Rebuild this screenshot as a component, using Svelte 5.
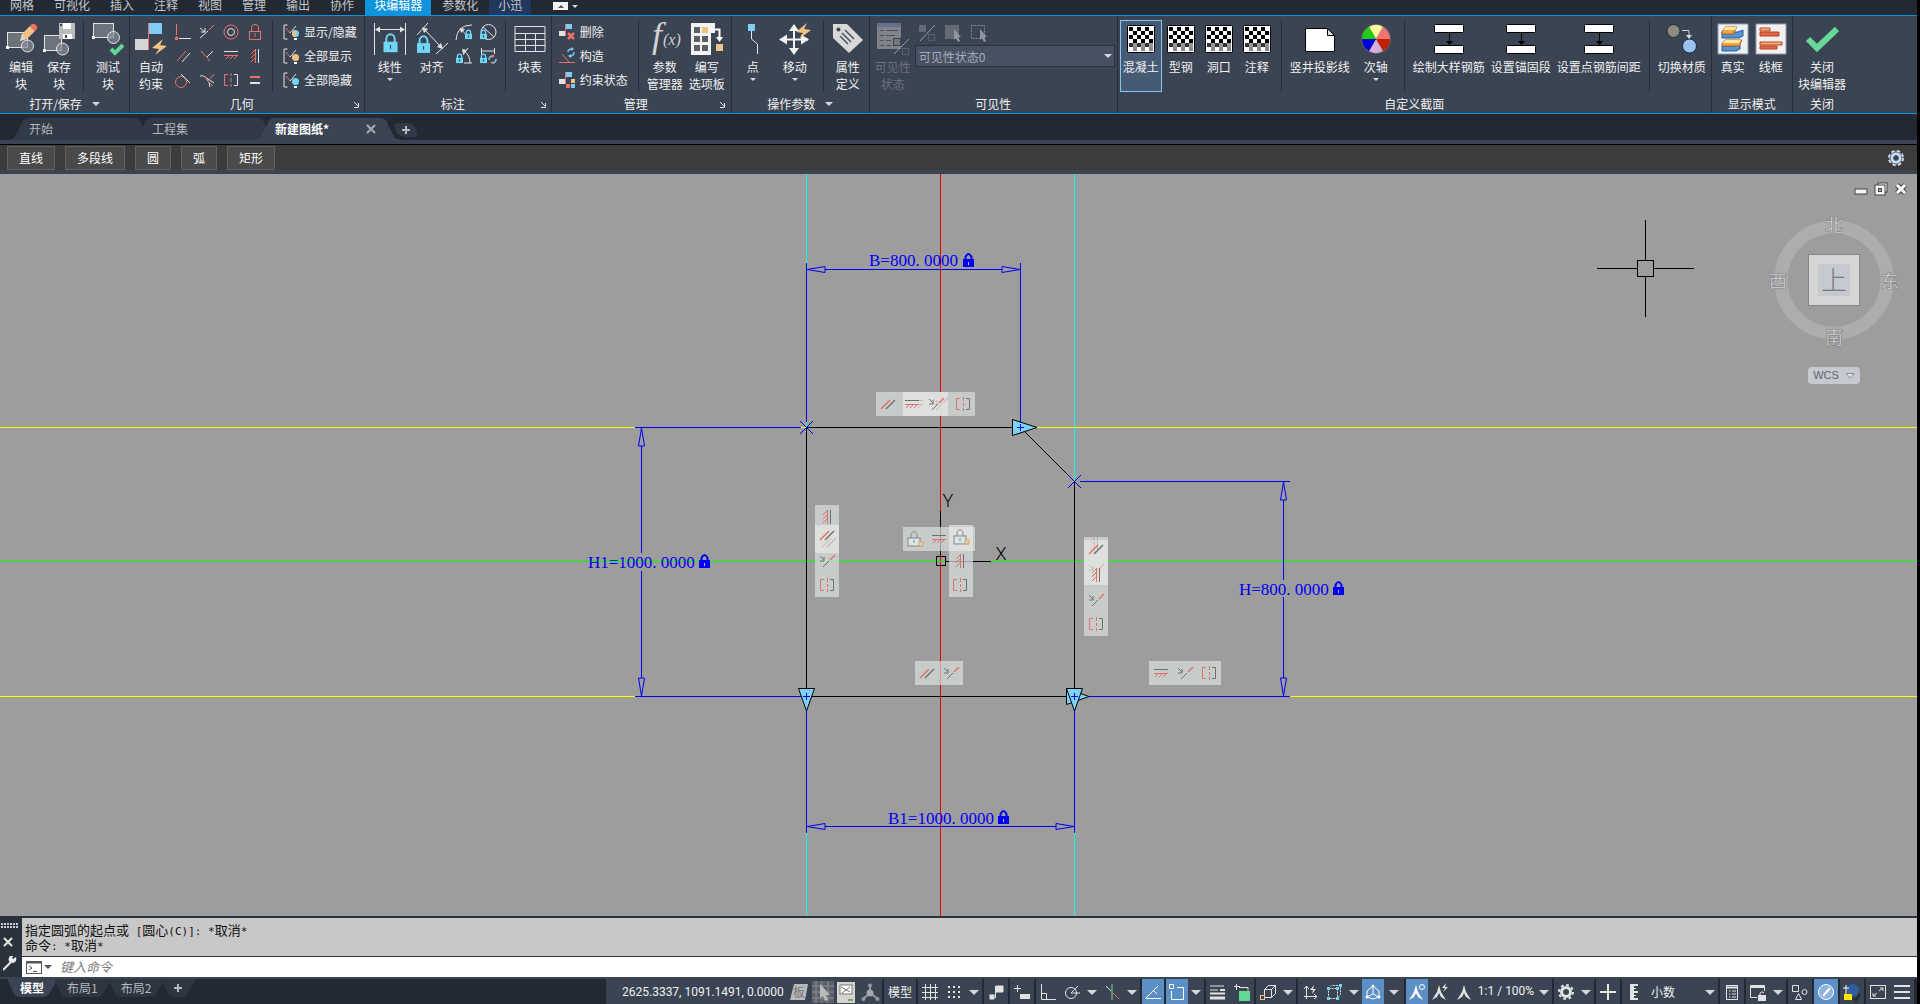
<script>
  const menuTabs = ['网格', '可视化', '插入', '注释', '视图', '管理', '输出', '协作', '块编辑器', '参数化', '小迅'];
  const R = '#ef6f68';
  const W = '#e3e3e3';
  const B = '#7fcaf7';
  const C = '#6fd6f6';
  const O = '#f2c185';
  const padlock = (x, y, w, c = C) =>
    `<path d="M${x + w * 0.2} ${y + w * 0.6}V${y + w * 0.38}a${w * 0.3} ${w * 0.36} 0 0 1 ${w * 0.6} 0V${y + w * 0.6}" fill="none" stroke="${c}" stroke-width="${w > 9 ? 2 : 1.3}"/><rect x="${x}" y="${y + w * 0.55}" width="${w}" height="${w * 0.75}" fill="${c}"/><path d="M${x + w / 2} ${y + w * 0.78}v${w * 0.28}" stroke="#26506a" stroke-width="1.2"/>`;
  const bolt = (x, y) => `<path d="M${x + 11} ${y}L${x} ${y + 9}l7 1l-4 6l12-9l-7-1z" fill="${O}"/>`;
  const link = `<path d="M4.500 1H1v14h3.500" fill="none" stroke="${W}"/><path d="M3 4l4 5" fill="none" stroke="${R}"/><path d="M7 9l6-7" stroke="${W}"/>`;
  const flags = `<path d="M6.500 0v12" stroke="${R}"/><rect x="7" width="6" height="5" fill="${B}"/><rect y="7" width="6" height="5" fill="${W}"/>`;
  const bar2 = `<rect x="1.500" y="1.500" width="29" height="8" rx="1" fill="#fff" stroke="#000"/><rect x="1.500" y="22.500" width="29" height="8" rx="1" fill="#fff" stroke="#000"/><path d="M16.500 10v9" stroke="#000"/><path d="M13 18h7l-3.500 4z"/>`;
  let checks = '<rect x="2.500" y="2.500" width="27" height="27" rx="1" fill="#fff" stroke="#000"/>';
  for (let r = 0; r < 6; r++)
    for (let c = 0; c < 6; c++)
      if (r === 5 ? c % 2 === 1 : (r + c) % 2 === (r > 3 ? 1 : 0) || r === 4)
        checks += `<rect x="${4 + c * 4}" y="${4 + r * 4}" width="4" height="4" fill="${r === 5 ? '#888' : r === 4 ? ((c % 2) ? '#999' : '#333') : '#000'}"/>`;
  const wheelColors = ['#fffb9c', '#ef7670', '#c22000', '#d9add9', '#0000d8', '#22cf0c'];
  const wheel = wheelColors
    .map((c, i) => {
      const p = (d) => `${16 + 14 * Math.sin((d * Math.PI) / 180)} ${16 - 14 * Math.cos((d * Math.PI) / 180)}`;
      return `<path d="M16 16L${p(i * 60 - 30)}A14 14 0 0 1 ${p(i * 60 + 30)}z" fill="${c}"/>`;
    })
    .join('');

  const icons = {
    edit: `<rect x="2.500" y="9.500" width="20" height="15" fill="#6d737d" stroke="${W}"/><circle cx="22.500" cy="23" r="6" fill="#8a8f98" fill-opacity=".7" stroke="${W}"/><rect x="1" y="23" width="3" height="3" fill="#fff"/><path d="M15 18l2-7l8-8l5 5l-8 8z" fill="${O}"/><path d="M15 18l2-7l4 5z" fill="#dcd6cc"/><path d="M25 3l2-2q2-1 4 1t1 4l-2 2z" fill="${R}"/>`,
    save: `<rect x="1.500" y="12.500" width="17" height="15" fill="#6d737d" stroke="${W}"/><circle cx="19.500" cy="26" r="6" fill="#8a8f98" fill-opacity=".7" stroke="${W}"/><rect y="26" width="3" height="3" fill="#fff"/><rect x="16" width="16" height="16" fill="#b9bdbb"/><path d="M20 0h8v6h-8zM20 11h9v5h-9z" fill="#fff"/><path d="M22 12h2v3h-2zM17 1h2v2h-2z" fill="#3b4453"/>`,
    test: `<rect x="1.500" y=".5" width="20" height="14" fill="#6d737d" stroke="${W}"/><circle cx="21.500" cy="14.500" r="6" fill="#8a8f98" fill-opacity=".7" stroke="${W}"/><rect y="13" width="3" height="3" fill="#fff"/><path d="M19 26l4 4l8-8" fill="none" stroke="#62d895" stroke-width="4"/>`,
    auto: `<rect x="14" width="13" height="11" fill="${B}"/><rect y="16" width="13" height="11" fill="#d6d6d6"/><path d="M13.500 0v27" stroke="${R}"/>${bolt(17, 16)}`,
    perp: `<path d="M1.500 0v11m0 1v3" stroke="${R}"/><path d="M0 13h3v3H0z" fill="${R}"/><path d="M4 14.500h12" stroke="${W}"/>`,
    onto: `<path d="M1 4l5 4M6 4v4H2" stroke="${W}" fill="none"/><path d="M1 14l8-7" stroke="${W}"/><path d="M10 6l5-5" stroke="${R}"/>`,
    conc: `<circle cx="8" cy="8" r="7" fill="none" stroke="${R}"/><circle cx="8" cy="8" r="3.500" fill="none" stroke="${W}"/>`,
    fix: `<path d="M4.500 7V3.500q0-3 3.500-3t3.500 3V7" fill="none" stroke="${R}"/><rect x="2.500" y="7.500" width="11" height="8" fill="none" stroke="${R}"/><path d="M8 9v4" stroke="${R}"/>`,
    para: `<path d="M2 13L11 3" stroke="${R}"/><path d="M7 14L15 5" stroke="${W}"/>`,
    tick: `<path d="M2 3l9 10" stroke="${R}"/><path d="M8 9l6-6" stroke="${W}"/>`,
    horiz: `<path d="M1 3.500h14" stroke="${W}"/><path d="M1 7.500h14M3 11l3-3M7 11l3-3M11 11l3-3" stroke="${R}" fill="none"/>`,
    vert: `<path d="M11.500 1v14" stroke="${W}"/><path d="M8.500 1v14M4 6l4-4M4 10l4-4M4 14l4-4" stroke="${R}" fill="none"/>`,
    tang: `<circle cx="6" cy="10" r="5.500" fill="none" stroke="${R}"/><path d="M6 2l9 9" stroke="${W}"/>`,
    smooth: `<path d="M1 4q3-1 5 1l9 6M7 6q4 4 4 9" fill="none" stroke="${W}"/><path d="M6 5l3 3M11 7l4-5M9 9l5 5" stroke="${R}"/>`,
    sym: `<path d="M5 2.500H1.500v11H5M8 1v3M8 6v4M8 12v3" fill="none" stroke="${R}"/><path d="M11 2.500h3.500v11H11" fill="none" stroke="${W}"/>`,
    equal: `<rect x="3" y="4" width="10" height="2" fill="${R}"/><rect x="3" y="10" width="10" height="2" fill="${W}"/>`,
    toggle: `${link}<circle cx="12.500" cy="9.500" r="3.500" fill="${C}"/><path d="M12.500 6a3.500 3.500 0 0 0 0 7z" fill="${O}"/><path d="M11 14h3v2h-3z" fill="#fff"/>`,
    showAll: `${link}<circle cx="12.500" cy="9.500" r="3.500" fill="${O}"/><path d="M11 14h3v2h-3z" fill="#fff"/>`,
    hideAll: `${link}<circle cx="12.500" cy="9.500" r="3.500" fill="${C}"/><path d="M11 14h3v2h-3z" fill="#fff"/>`,
    linear: `<path d="M.5 0v32M31.500 0v32M2 6.500h28" stroke="${W}"/><path d="M1 6.500l5-3v6zM31 6.500l-5-3v6z" fill="${W}"/>${padlock(9.500, 11, 14)}`,
    aligned: `<path d="M1 12L12 0M20 31L32 20M8 6l17 18" stroke="${W}"/><path d="M6 4l6 2l-4 4zM27 26l-6-2l4-4z" fill="${W}"/>${padlock(1, 13, 13)}`,
    radius: `<path d="M0 16Q1 1 16 1M5 5l6 7" fill="none" stroke="${W}"/><path d="M4 4l5 1l-4 4z" fill="${W}"/>${padlock(9, 6, 7)}`,
    diam: `<circle cx="8.500" cy="8" r="7.500" fill="none" stroke="${W}"/><path d="M3 3l11 10" stroke="${W}"/>${padlock(0, 6, 7)}`,
    angular: `<path d="M7 7l5-7M8 15h8M8 3q6 4 6 12" fill="none" stroke="${W}"/><path d="M11 2l-5-1l1 5z" fill="${W}"/>${padlock(0, 6, 7)}`,
    convert: `<path d="M1.500 0v6M14.500 0v6M2 3h12" stroke="${W}"/>${padlock(0, 6, 7)}<path d="M9 12q0-4 4-4M16 11q0 4-4 4" fill="none" stroke="${B}" stroke-width="1.500"/><path d="M12 6l3 2l-3 2zM13 13l-3 2l3 1z" fill="${R}"/>`,
    table: `<path d="M1 3.500h30v25H1zM1 10.500h30M1 16.500h30M1 22.500h30M11.500 10v18M21.500 10v18" fill="none" stroke="${W}"/>`,
    del: `${flags}<path d="M9 9l6 6M15 9l-6 6" stroke="${R}" stroke-width="2.500"/>`,
    construct: `<path d="M0 14.500h16M3 6l7 8" stroke="${R}"/><path d="M9 4q0-3 4-3M15 4q0 4-4 4" fill="none" stroke="${B}" stroke-width="1.500"/><path d="M12-1l3 2l-3 2zM12 6l-3 2l3 2z" fill="${B}"/>`,
    state: `${flags}<rect x="12" y="7" width="4" height="4" fill="${O}"/><rect x="7" y="12" width="4" height="4" fill="${R}"/><rect x="12" y="12" width="4" height="4" fill="${B}"/>`,
    fx: `<g fill="#d2d2d2" font-family="Liberation Serif, serif" font-style="italic"><text x="3" y="24" font-size="36">f</text><text x="14" y="22" font-size="16">(x)</text></g>`,
    palette: `<path d="M0 0h24v10h-4v22H0z" fill="#f3f3f3"/><g fill="#5d5f62"><path d="M3 4h6v6H3zM3 13h6v6H3zM11 13h6v6h-6zM3 22h6v6H3zM11 22h6v6h-6z"/></g><rect x="11" y="4" width="6" height="6" fill="${O}"/><path d="M20 6.500h8.500V15" fill="none" stroke="#fff" stroke-width="2"/><path d="M25 14h7l-3.500 5z" fill="#fff"/><rect x="25" y="21" width="7" height="7" fill="${O}"/>`,
    point: `<rect x="11" y="1" width="7" height="7" fill="${B}"/><path d="M14.500 8v8l6 5v10" fill="none" stroke="${W}"/>`,
    move: `<path d="M15 4v26M3 16.500h26" stroke="#f3f3f3" stroke-width="2"/><path d="M15 1l5 7H10zM15 32l5-7H10zM0 16.500l8-5v10zM30 16.500l-8-5v10z" fill="#f3f3f3"/>${bolt(17, 0)}`,
    tag: `<path d="M1 1h14l16 16L17 30L1 15z" fill="#d8d8d8"/><circle cx="6.500" cy="6.500" r="2" fill="#3b4453"/><path d="M13 7l9 9M10 10l9 9M8 13l8 8" stroke="#4d535e" stroke-width="1.500"/>`,
    vis: `<rect x="0" width="24" height="26" fill="#80838a"/><rect width="24" height="4" fill="#66708c"/><path d="M3 7.500h4m2 0h12M3 12.500h4m2 0h9M3 17.500h4m2 0h5M3 22.500h4m2 0h5" stroke="#4a505c"/><rect x="16.500" y="15.500" width="7" height="7" fill="#737880" stroke="#3b4453"/><path d="M17 31L32 16" stroke="#9a9da4"/><rect x="25.500" y="25.500" width="6" height="6" fill="none" stroke="#777c87" stroke-dasharray="1 1"/>`,
    vis1: `<rect width="7" height="7" fill="#666a72"/><path d="M1 16L16 0" stroke="#9a9da4"/><rect x="9.500" y="9.500" width="6" height="6" fill="none" stroke="#777c87" stroke-dasharray="1 1"/>`,
    vis2: `<rect width="14" height="14" fill="#666a72"/><path d="M9 4v11l2-2l2 4l2-1l-2-4h3z" fill="#93969c"/>`,
    vis3: `<rect x=".5" y=".5" width="13" height="13" fill="none" stroke="#858991" stroke-dasharray="2 1"/><path d="M9 4v11l2-2l2 4l2-1l-2-4h3z" fill="#93969c"/>`,
    checks,
    sheet: `<path d="M1.500 5.500h22l7 7v16h-29z" fill="#fff" stroke="#000"/><path d="M23.500 5.500v7h7z" fill="#ddd" stroke="#000"/>`,
    wheel: `<circle cx="16" cy="16" r="15" fill="#5a5f66"/>${wheel}`,
    bar2,
    swap: `<circle cx="7.500" cy="8" r="6.500" fill="#8c8b80" stroke="#26292c"/><circle cx="23.500" cy="23" r="7" fill="#9cc3ee" stroke="#15295c"/><path d="M16 7.500h7V13" fill="none" stroke="#c9c9c9"/><path d="M20 12h6l-3 4z" fill="#d9d9d9"/>`,
    real: `<rect x="1" y="1" width="30" height="30" fill="#edf1f1" stroke="#8f9dbb"/><path d="M5 9h16l5-2v6l-4 2H5z" fill="#5295cf" stroke="#315a96"/><path d="M5 9l3-5h12l-3 5v2H5z" fill="#eda84d" stroke="#b75c1e"/><path d="M6 7l2-3h12l-2 3z" fill="#ffe995"/><path d="M5 23h14l4-2v5l-4 2H5z" fill="#5295cf" stroke="#315a96"/><path d="M5 21l3-4h17l-3 6H5z" fill="#eda84d" stroke="#b75c1e"/><path d="M6 20l2-3h16l-2 3z" fill="#ffe995"/>`,
    wire: `<rect x="1" y="1" width="30" height="30" fill="#f2f1f0" stroke="#8f9dbb"/><g stroke="#b8451f"><path d="M5 5h10v3H5zM5 19h22v3H5z" fill="#f3b27b"/><path d="M5 9h19v4H5zM5 23h17v3H5z" fill="#dd674a"/></g>`,
    ok: `<path d="M2 16l9 9L31 6" fill="none" stroke="#67d898" stroke-width="6"/>`,
    gearBlue: `<g stroke="#46699c" fill="#cfdbe8"><circle cx="9" cy="9" r="6.500" stroke="#dfe7ef" stroke-width="3" stroke-dasharray="3 2.100"/><circle cx="9" cy="9" r="6"/><circle cx="9" cy="9" r="2.500" fill="#3c3c3c"/></g>`,
    arrow: `<path d="M3 6h10l-5 5z" fill="#d8d8d8"/>`,
    board: `<path d="M4 0h14l-3 16H0z" fill="#b9b9b9"/><text x="3" y="13" font-size="12" fill="#777">板</text>`,
    cursorGrid: `<rect x="-2" y="-3" width="22" height="22" fill="#5d6069"/><path d="M2-3v22M8-3v22M14-3v22M-2 2h22M-2 8h22M-2 14h22" stroke="#8c8e94"/><path d="M6 0v14l3-2l2 5l3-1l-2-5h4z" fill="#bbb"/>`,
    page: `<rect x="-1" y="-2" width="18" height="21" fill="#d5d5cf"/><rect x="2" y="1" width="12" height="9" fill="#fff" stroke="#777"/><path d="M3 3l9 5M12 3L4 9" stroke="#777"/><path d="M10 15h5v2h-5z" fill="#76a36c"/>`,
    tripod: `<path d="M8 1v8L1 15M8 9l8 6" fill="none" stroke="#96989c" stroke-width="2"/><circle cx="8" cy="9" r="3.500" fill="#a5a7aa"/><circle cx="8" cy="1.500" r="2" fill="#96989c"/><circle cx="1.500" cy="15" r="2" fill="#96989c"/><circle cx="15.500" cy="15" r="2" fill="#96989c"/>`,
    grid: `<path d="M3.500 0v16M8.500 0v16M13.500 0v16M0 3.500h16M0 8.500h16M0 13.500h16" stroke="${W}"/>`,
    dots: `<g fill="${W}"><path d="M2 2h2v2H2zM7 2h2v2H7zM12 2h2v2h-2zM2 7h2v2H2zM7 7h2v2H7zM12 7h2v2h-2zM2 12h2v2H2zM7 12h2v2H7zM12 12h2v2h-2z"/></g>`,
    snap: `<path d="M1.500 10.500h5v5h-5z" fill="${W}"/><path d="M7.500 2v12M8 2h7v6H8z" stroke="${W}" fill="${W}"/>`,
    dyn: `<path d="M3.500 1v7M0 4.500h7" stroke="${W}"/><rect x="6" y="10" width="10" height="5" fill="${W}"/>`,
    ortho: `<path d="M1.500 0v15.500H16M1.500 9.500h5v6" fill="none" stroke="${W}"/>`,
    polar: `<circle cx="7" cy="9" r="5.500" fill="none" stroke="${W}"/><path d="M7 9h9M7 9l7-7" stroke="${W}"/>`,
    iso: `<path d="M8 0v16" stroke="#62d895"/><path d="M2 2l5 5" stroke="${W}"/><path d="M8 8l7 7" stroke="${R}"/>`,
    track: `<path d="M1 14.500h15M1 14L13 2" stroke="#fff" fill="none"/><path d="M9 7l3 3" stroke="#fff"/>`,
    osnap: `<path d="M2.500 7v8.500h12v-12H8" fill="none" stroke="#fff"/><path d="M.5.500h4v4h-4z" fill="none" stroke="#fff"/>`,
    lw: `<path d="M0 2h14M0 6h8" stroke="${W}"/><path d="M0 9.500h15" stroke="${W}" stroke-width="2"/><path d="M0 14h15" stroke="${W}" stroke-width="3"/><path d="M10 6h5" stroke="${W}" stroke-width="2"/>`,
    trans: `<path d="M2.500 0v6M0 2.500h6M5 3.500h9v3" stroke="${W}" fill="none"/><rect x="5" y="7" width="11" height="10" fill="#62d895"/>`,
    cyc: `<path d="M4.500 5.500l4-4h7v8l-4 4h-7zM4.500 5.500h7v8M11.500 5.500l4-4" fill="none" stroke="${W}"/><rect x=".5" y="11.500" width="4" height="4" fill="#3b4453" stroke="${O}"/>`,
    ucs: `<path d="M4.500 15V2M2 5l2.500-3L7 5M2 12.500h13M12 10l3 2.500l-3 2.500" fill="none" stroke="${W}"/><path d="M12 1L8 6h3l-1 4l4-5h-3z" fill="${W}"/>`,
    cube: `<path d="M2.500 4.500l3-3h9v9l-3 4h-9zM2.500 4.500h9v10M11.500 4.500l3-3" fill="none" stroke="${W}" stroke-dasharray="2 1"/><g fill="${C}"><path d="M1 3h3v3H1zM10 3h3v3h-3zM1 13h3v3H1zM10 13h3v3h-3zM13 0h3v3h-3z"/></g>`,
    gizmo: `<path d="M8 2l6 5v6l-6 2l-6-2V7zM8 2v8l-6 3M8 10l6 3" fill="none" stroke="#fff"/><circle cx="8" cy="2" r="1.500" fill="#fff"/><circle cx="2" cy="13" r="1.500" fill="#fff"/><circle cx="14" cy="13" r="1.500" fill="#fff"/>`,
    anno1: `<path d="M7 1l2 7l5 8l-5-3l-2-4l-2 4l-5 3l5-8z" fill="#fff"/><circle cx="13" cy="3" r="2.500" fill="none" stroke="#fff"/>`,
    anno2: `<path d="M7 1l2 7l5 8l-5-3l-2-4l-2 4l-5 3l5-8z" fill="${W}"/><path d="M14-1l-4 5h3l-2 4l5-5h-3z" fill="${W}"/>`,
    anno3: `<path d="M8 1l2 7l5 8l-5-3l-2-4l-2 4l-5 3l5-8z" fill="${W}"/>`,
    gear: `<circle cx="8" cy="8" r="4.500" fill="none" stroke="${W}" stroke-width="3"/><circle cx="8" cy="8" r="7" fill="none" stroke="${W}" stroke-width="2" stroke-dasharray="2.750 2.750"/>`,
    plus: `<path d="M8 0v16M0 8h16" stroke="${W}" stroke-width="2"/>`,
    ruler: `<path d="M4 0h8v2H8v2h2v1H8v2h4v2H8v2h2v1H8v2h4v2H4z" fill="${W}"/>`,
    props: `<rect x="2.500" y="1.500" width="11" height="14" fill="none" stroke="${W}"/><path d="M3 3.500h10" stroke="${W}" stroke-width="2"/><path d="M5 7h1.500M8 7h4M5 10h1.500M8 10h4M5 13h1.500M8 13h4" stroke="${W}"/>`,
    lockui: `<path d="M7 13.500H.5v-12h14V7" fill="none" stroke="${W}"/><path d="M1 3h13" stroke="${W}" stroke-width="2"/><rect x="8" y="11" width="8" height="6" fill="${W}"/><path d="M10 11V9q2-2.500 4 0" fill="none" stroke="${W}"/>`,
    isolate: `<path d="M.5 1.500h6v6h-6zM3.500 15.500l3-6l3 6z" fill="none" stroke="${W}"/><circle cx="12.500" cy="8" r="2.500" fill="none" stroke="${W}"/>`,
    perf: `<circle cx="8" cy="8" r="7.500" fill="#8db4dc" stroke="#fff"/><path d="M5 12l7-8" stroke="#fff" stroke-width="2"/>`,
    python: `<circle cx="9" cy="6" r="6" fill="#2c5fa0"/><path d="M0 10h8v6H0z" fill="#ffe600"/><path d="M2 1v9M-1 4h6" stroke="#fff"/><path d="M9 14l3 2l4-6" stroke="#1f2630" stroke-width="2" fill="none"/>`,
    full: `<rect x=".5" y="1.500" width="15" height="13" fill="none" stroke="${W}"/><path d="M9 7l4-3M13 7V4h-3M7 9l-4 3M3 9v3h3" fill="none" stroke="${W}"/>`,
    menu: `<path d="M0 2h16M0 8h16M0 14h16" stroke="${W}" stroke-width="2"/>`,
    launch: `<path d="M4 4l4 4M8.500 5v4.500H4" stroke="${W}" fill="none"/>`,
  };

  // Constraint markers drawn on the canvas, centred on their own origin.
  const D = '#6f7072';
  const K = '#e0716a';
  const marks = {
    para: `<path d="M-7 5L2-4" stroke="${K}" stroke-width="1.500"/><path d="M-2 5L7-4" stroke="${D}" stroke-width="1.500"/>`,
    ground: `<path d="M-7-3.500H7" stroke="${D}"/><path d="M-7 .5H7M-6 4l3-3M-2 4l3-3M2 4l3-3" stroke="${K}"/>`,
    onto: `<path d="M-7-5l4 4M-3-4v4h-4M-4 6l6-6" stroke="${D}"/><path d="M3-1L8-6" stroke="${K}" stroke-width="1.500"/>`,
    sym: `<path d="M-3-5.500h-3.500v11H-3M.5-7v4M.5-1v3M.5 4v3" stroke="${K}"/><path d="M3-5.500h3.500v11H3" stroke="${D}"/>`,
    vert: `<path d="M.5-7V7M-4-2l4-4M-4 2l4-4M-4 6l4-4" stroke="${K}"/><path d="M3.500-7V7" stroke="${D}"/>`,
    lock: `<path d="M-3-1v-4q3-5 6 0v4" stroke="#868789"/><rect x="-6" y="-1" width="12" height="8" fill="#d9e6e6" stroke="#868789"/><path d="M0 1v3" stroke="#868789"/><rect x="5" y="3" width="4" height="4" fill="#d8d2c6" stroke="#d9a35d"/>`,
  };
  const bars = [
    [876, 218, 99, 24], [815, 331, 24, 92], [903, 353, 72, 24], [949, 377, 24, 46],
    [1084, 363, 24, 99], [915, 487, 48, 24], [1149, 487, 72, 24],
  ];
  const lit = [[903, 218, 45, 24], [815, 351, 24, 28], [949, 351, 24, 26], [1084, 366, 24, 45]];
  const placed = [
    ['para', 888, 230], ['ground', 912, 230], ['onto', 936, 230], ['sym', 963, 230],
    ['vert', 827, 343], ['para', 827, 361], ['onto', 827, 387], ['sym', 827, 411],
    ['lock', 914, 365], ['ground', 939, 365], ['lock', 960, 363], ['vert', 960, 387], ['sym', 960, 411],
    ['para', 1096, 375], ['vert', 1096, 401], ['onto', 1096, 426], ['sym', 1096, 450],
    ['para', 927, 499], ['onto', 951, 499],
    ['ground', 1161, 499], ['onto', 1185, 499], ['sym', 1209, 499],
  ];
  const ghosts = [['ground', 916, 230], ['onto', 940, 230], ['para', 829, 368], ['vert', 1094, 370], ['onto', 1096, 396]];
  const dims = [
    { text: 'B=800. 0000', x: 869, y: 92, lx: 963, ly: 79 },
    { text: 'H1=1000. 0000', x: 588, y: 394, lx: 699, ly: 380 },
    { text: 'H=800. 0000', x: 1239, y: 421, lx: 1333, ly: 407 },
    { text: 'B1=1000. 0000', x: 888, y: 650, lx: 998, ly: 636 },
  ];

  const status = [
    [['board'], ['cursorGrid'], ['page'], ['tripod']],
    [['模型', 'text']],
    [['grid'], ['dots'], ['arrow', 'drop']],
    [['snap']], [['dyn']],
    [['ortho'], ['polar'], ['arrow', 'drop'], ['iso'], ['arrow', 'drop']],
    [['track', 'on']], [['osnap', 'on'], ['arrow', 'drop']],
    [['lw'], ['trans']],
    [['cyc'], ['arrow', 'drop']],
    [['ucs'], ['cube'], ['arrow', 'drop'], ['gizmo', 'on'], ['arrow', 'drop wide']],
    [['anno1', 'on'], ['anno2'], ['anno3'], ['1:1 / 100%', 'text scale'], ['arrow', 'drop']],
    [['gear'], ['arrow', 'drop']],
    [['plus']],
    [['ruler'], ['小数', 'text units'], ['arrow', 'drop']],
    [['props']],
    [['lockui'], ['arrow', 'drop']],
    [['isolate']], [['perf', 'on full']], [['python']],
    [['full'], ['menu']],
  ];

  let command = $state('');
</script>

{#snippet ic(name, size)}
  <svg class="ic" width={size} height={size} viewBox="0 0 {size} {size}" aria-hidden="true">{@html icons[name]}</svg>
{/snippet}

{#snippet big(name, lines, drop, cls)}
  <button class="big {cls ?? ''}">
    {@render ic(name, 32)}
    {#each lines as line}<span>{line}</span>{/each}
    {#if drop}<i class="tri small"></i>{/if}
  </button>
{/snippet}

{#snippet row(name, label)}
  <button class="row">{@render ic(name, 16)}<span>{label}</span></button>
{/snippet}

{#snippet tiny(name)}
  <button class="tiny" aria-label={name}>{@render ic(name, 16)}</button>
{/snippet}

{#snippet title(label, kind)}
  <footer class:launcher={kind === 'launch'}>
    <span>{label}</span>
    {#if kind === 'drop'}<i class="tri"></i>{/if}
    {#if kind === 'launch'}<button aria-label="{label}设置">{@render ic('launch', 12)}</button>{/if}
  </footer>
{/snippet}

<div class="app">
  <nav class="menu">
    {#each menuTabs as t}
      <button class:active={t === '块编辑器'} class:brand={t === '小迅'}>{t}</button>
    {/each}
    <button class="min" aria-label="最小化功能区"><span class="minbox"><i></i></span><i class="tri small"></i></button>
  </nav>

  <header class="ribbon">
    <section>
      <div class="tools">
        {@render big('edit', ['编辑', '块'])}
        {@render big('save', ['保存', '块'])}
        <hr />
        {@render big('test', ['测试', '块'])}
      </div>
      {@render title('打开/保存', 'drop')}
    </section>
    <section>
      <div class="tools">
        {@render big('auto', ['自动', '约束'])}
        <div class="grid four">
          {#each ['perp', 'onto', 'conc', 'fix', 'para', 'tick', 'horiz', 'vert', 'tang', 'smooth', 'sym', 'equal'] as n}{@render tiny(n)}{/each}
        </div>
        <hr />
        <div class="list">
          {@render row('toggle', '显示/隐藏')}
          {@render row('showAll', '全部显示')}
          {@render row('hideAll', '全部隐藏')}
        </div>
      </div>
      {@render title('几何', 'launch')}
    </section>
    <section>
      <div class="tools">
        {@render big('linear', ['线性'], true, 'wide')}
        {@render big('aligned', ['对齐'])}
        <div class="grid two">
          {#each ['radius', 'diam', 'angular', 'convert'] as n}{@render tiny(n)}{/each}
        </div>
        <hr />
        {@render big('table', ['块表'])}
      </div>
      {@render title('标注', 'launch')}
    </section>
    <section class="manage">
      <div class="tools">
        <div class="list">
          {@render row('del', '删除')}
          {@render row('construct', '构造')}
          {@render row('state', '约束状态')}
        </div>
        <hr />
        {@render big('fx', ['参数', '管理器'])}
        {@render big('palette', ['编写', '选项板'])}
      </div>
      {@render title('管理', 'launch')}
    </section>
    <section>
      <div class="tools">
        {@render big('point', ['点'], true)}
        {@render big('move', ['移动'], true, 'wide')}
        <hr />
        {@render big('tag', ['属性', '定义'])}
      </div>
      {@render title('操作参数', 'drop')}
    </section>
    <section>
      <div class="tools">
        {@render big('vis', ['可见性', '状态'], false, 'off')}
        <div class="visibility">
          <div class="vis-icons">
            {#each ['vis1', 'vis2', 'vis3'] as n}{@render tiny(n)}{/each}
          </div>
          <label class="combo">
            <select aria-label="可见性状态"><option>可见性状态0</option></select>
            <i class="tri"></i>
          </label>
        </div>
      </div>
      {@render title('可见性')}
    </section>
    <section>
      <div class="tools">
        {@render big('checks', ['混凝土'], false, 'selected')}
        {@render big('checks', ['型钢'])}
        {@render big('checks', ['洞口'])}
        {@render big('checks', ['注释'])}
        <hr />
        {@render big('sheet', ['竖井投影线'])}
        {@render big('wheel', ['次轴'], true, 'wide')}
        <hr />
        {@render big('bar2', ['绘制大样钢筋'])}
        {@render big('bar2', ['设置锚固段'])}
        {@render big('bar2', ['设置点钢筋间距'])}
        <hr />
        {@render big('swap', ['切换材质'])}
      </div>
      {@render title('自定义截面')}
    </section>
    <section>
      <div class="tools">
        {@render big('real', ['真实'])}
        {@render big('wire', ['线框'])}
      </div>
      {@render title('显示模式')}
    </section>
    <section class="last">
      <div class="tools">
        {@render big('ok', ['关闭', '块编辑器'])}
      </div>
      {@render title('关闭')}
    </section>
  </header>

  <nav class="docs">
    <button class="doc">开始</button>
    <button class="doc">工程集</button>
    <button class="doc current"><span>新建图纸*</span>
      <svg width="10" height="10" viewBox="0 0 10 10" aria-hidden="true"><path d="M1 1l8 8M9 1l-8 8" stroke="#a9adb3" stroke-width="2" /></svg>
    </button>
    <button class="add" aria-label="新建">
      <svg width="8" height="8" viewBox="0 0 8 8" aria-hidden="true"><path d="M4 0v8M0 4h8" stroke="#b4b7bb" stroke-width="2" /></svg>
    </button>
  </nav>

  <div class="shapes">
    {#each ['直线', '多段线', '圆', '弧', '矩形'] as s}<button>{s}</button>{/each}
    <button class="settings" aria-label="设置">{@render ic('gearBlue', 18)}</button>
  </div>

  <main class="canvas">
    <svg class="drawing" width="100%" height="100%" aria-label="截面图">
      <g class="crisp" fill="none">
        <path d="M806.500 0V2000M1074.500 0V2000" stroke="#00ffff" />
        <path d="M940.500 0V2000" stroke="#e80000" />
        <line x1="0" y1="253.500" x2="100%" y2="253.500" stroke="#ffff00" />
        <line x1="0" y1="522.500" x2="100%" y2="522.500" stroke="#ffff00" />
        <line x1="0" y1="387.500" x2="100%" y2="387.500" stroke="#00ff00" />
        <g stroke="#0000f5">
          <path d="M806.500 89V248M1020.500 89V248M807 95.500H1020" />
          <path d="M635 253.500H801M635 522.500H806M641.500 254V379M641.500 397V522" />
          <path d="M1080 307.500H1290M1075 522.500H1290M1283.500 308V406M1283.500 423V522" />
          <path d="M806.500 523V659M1074.500 523V659M807 652.500H1074" />
        </g>
        <path d="M1020 253.500H806.500V522.500H1074.500V307" stroke="#000" />
      </g>
      <path d="M1020.500 253.500L1074.500 307.500" stroke="#000" />
      <g stroke="#0000f5" fill="#9d9d9d">
        <path d="M807 95.500L825 92.500v6zM1020 95.500L1002 92.500v6z" />
        <path d="M807 652.500L825 649.500v6zM1074 652.500L1056 649.500v6z" />
        <path d="M641.500 254L638.500 272h6zM641.500 522L638.500 504h6z" />
        <path d="M1283.500 308L1280.500 326h6zM1283.500 522L1280.500 504h6z" />
      </g>
      <path d="M800 247l13 13M813 247l-13 13M1068 301l13 13M1081 301l-13 13" stroke="#0000cd" />
      <g fill="#7dd2f7" stroke="#000">
        <path d="M1012.500 245.500v16L1037 253.500z" />
        <path d="M1066.500 514.500v16L1089 522.500z" />
        <path d="M798.500 514.500h16L806.500 537z" />
        <path d="M1066.500 514.500h16L1074.500 537z" />
      </g>
      <path class="crisp" d="M1017 253.500h7M1020.500 250v7M803 522.500h7M806.500 519v7M1071 522.500h7M1074.500 519v7" stroke="#0000f5" />

      {#each dims as d}
        <text class="dim" x={d.x} y={d.y}>{d.text}</text>
        <g transform="translate({d.lx} {d.ly})">
          <path d="M2.500 6V4q3-6 6 0v2" fill="none" stroke="#0000f5" stroke-width="2" />
          <rect y="6" width="11" height="8" fill="#0000f5" />
          <path d="M5.500 9v3" stroke="#b9b9d8" />
        </g>
      {/each}

      <g class="crisp" fill="none" stroke="#000">
        <path d="M940.500 337V382M945 387.500H991" />
        <rect x="936.500" y="382.500" width="9" height="9" />
      </g>
      <text class="axis" x="948" y="333">Y</text>
      <text class="axis" x="1001" y="386">X</text>

      {#each bars as [x, y, w, h]}<rect class="bar" {x} {y} width={w} height={h} />{/each}
      {#each lit as [x, y, w, h]}<rect class="lit" {x} {y} width={w} height={h} />{/each}
      {#each ghosts as [n, x, y]}<g class="ghost" fill="none" transform="translate({x} {y})">{@html marks[n]}</g>{/each}
      {#each placed as [n, x, y]}<g fill="none" transform="translate({x} {y})">{@html marks[n]}</g>{/each}

      <g class="crisp" fill="none" stroke="#000">
        <path d="M1597 94.500H1637M1654 94.500H1694M1645.500 46V86M1645.500 103V143" />
        <rect x="1637.500" y="86.500" width="16" height="16" />
      </g>
    </svg>

    <div class="win">
      <button aria-label="最小化"><svg width="14" height="14" viewBox="0 0 14 14"><rect x="1" y="7" width="12" height="5" fill="#f4f4f4" stroke="#444" /></svg></button>
      <button aria-label="还原"><svg width="14" height="14" viewBox="0 0 14 14"><rect x="4" y="1" width="9" height="9" fill="#f4f4f4" stroke="#444" /><rect x="1" y="3" width="10" height="10" fill="#f4f4f4" stroke="#444" /><rect x="4.500" y="6.500" width="3" height="3" fill="#aaa" stroke="#444" /></svg></button>
      <button aria-label="关闭"><svg width="14" height="14" viewBox="0 0 14 14"><path d="M3 3l8 8M11 3l-8 8" stroke="#444" stroke-width="5" /><path d="M3 3l8 8M11 3l-8 8" stroke="#fff" stroke-width="3" /></svg></button>
    </div>

    <div class="cube">
      <svg width="130" height="130" viewBox="0 0 130 130">
        <circle cx="65" cy="65" r="53" fill="none" stroke="#adadad" stroke-width="13" />
        <rect x="39.500" y="39.500" width="51" height="51" fill="#d6d6d6" stroke="#868686" />
        <rect x="49" y="49" width="32" height="32" fill="#c7c9d1" />
        <text class="up" x="65" y="75">上</text>
        <g class="compass">
          <text x="65" y="17">北</text>
          <text x="65" y="129">南</text>
          <text x="9" y="73">西</text>
          <text x="121" y="73">东</text>
        </g>
      </svg>
      <button class="wcs">WCS
        <svg width="10" height="6" viewBox="0 0 10 6" aria-hidden="true"><path d="M1 .5h8L5 5z" fill="#e6e6e6" stroke="#8b8b8b" /></svg>
      </button>
    </div>
  </main>

  <section class="command">
    <aside>
      <i class="grip"></i>
      <button aria-label="关闭命令行"><svg width="10" height="10" viewBox="0 0 10 10"><path d="M1 1l8 8M9 1l-8 8" stroke="#e6e6e6" stroke-width="2" /></svg></button>
      <button aria-label="自定义"><svg width="16" height="16" viewBox="0 0 16 16"><path d="M0 14l8-8" stroke="#ececec" stroke-width="2" /><path d="M7 0q2-2 4-1l-2 3l1 1l3-2q1 3-1 5t-5 0t0-6z" fill="#ececec" /></svg></button>
    </aside>
    <div class="lines">
      <div class="history">
        <p>指定圆弧的起点或<code>{' ['}</code>圆心<code>(C)]: *</code>取消<code>*</code></p>
        <p>命令<code>: *</code>取消<code>*</code></p>
      </div>
      <label class="entry">
        <svg width="16" height="13" viewBox="0 0 16 13" aria-hidden="true"><rect x=".5" y=".5" width="15" height="12" fill="#fff" stroke="#555" /><path d="M0 1.500h16" stroke="#555" stroke-width="2" /><path d="M3 5l3 2l-3 2M7 10.500h4" fill="none" stroke="#555" /></svg>
        <i class="tri dark"></i>
        <input type="text" bind:value={command} placeholder="键入命令" aria-label="命令" />
      </label>
    </div>
  </section>

  <footer class="status">
    <div class="layouts">
      <button class="lay current">模型</button>
      <button class="lay">布局1</button>
      <button class="lay">布局2</button>
      <button class="lay plus" aria-label="新建布局"><svg width="8" height="8" viewBox="0 0 8 8"><path d="M4 0v8M0 4h8" stroke="#b4b7bb" stroke-width="2" /></svg></button>
    </div>
    <div class="tray">
      {#each status as group, g}
        <div class="group">
          {#if g === 0}<span class="coords">2625.3337, 1091.1491, 0.0000</span>{/if}
          {#each group as [name, kind]}
            {#if kind?.startsWith('text')}
              <button class={kind}>{name}</button>
            {:else}
              <button class="cell {kind ?? ''}" aria-label={name}>{@render ic(name, 16)}</button>
            {/if}
          {/each}
        </div>
      {/each}
    </div>
  </footer>
</div>

<style>
  :global(body) {
    margin: 0;
    background: #000;
  }
  .app {
    display: flex;
    flex-direction: column;
    height: 100vh;
    box-sizing: border-box;
    border-right: 3px solid #000;
    overflow: hidden;
    background: #222933;
    color: #f0f0f0;
    font: 12px/17px 'Noto Sans CJK SC', sans-serif;
  }
  button {
    margin: 0;
    padding: 0;
    border: 0;
    background: none;
    color: inherit;
    font: inherit;
    white-space: nowrap;
  }
  svg {
    display: block;
    flex: none;
  }
  .ic {
    overflow: visible;
  }
  .tri {
    width: 0;
    height: 0;
    border: 4px solid transparent;
    border-top-color: #d8d8d8;
    border-bottom: 0;
  }
  .tri.small {
    border-width: 3px 3px 0;
  }
  .tri.dark {
    border-top-color: #555;
  }

  .menu {
    display: flex;
    height: 15px;
    flex: none;
    border-bottom: 1px solid #0e93dc;
  }
  .menu button {
    height: 15px;
    padding: 0 9px 5px;
    border: solid transparent;
    border-width: 0 1px;
    background-clip: padding-box;
    box-sizing: border-box;
    line-height: 10px;
    color: #c3c6ca;
  }
  .menu .active {
    background-color: #0e93dc;
    color: #fff;
  }
  .menu .brand {
    background-color: #22375c;
  }
  .menu .min {
    display: flex;
    align-items: center;
    gap: 4px;
    padding: 0 20px 3px;
  }
  .minbox {
    display: grid;
    place-items: center;
    width: 15px;
    height: 8px;
    background: #f3f3f3;
  }
  .minbox i {
    border: 3px solid transparent;
    border-top: 0;
    border-bottom-color: #555;
  }

  .ribbon {
    display: flex;
    flex: none;
    background: #3b4453;
    border-bottom: 1px solid #0e93dc;
  }
  .ribbon section {
    display: flex;
    flex: none;
    flex-direction: column;
    border-right: 1px solid #262e39;
    padding: 4px 2px 0;
  }
  .ribbon .manage {
    padding-right: 3px;
  }
  .ribbon .last {
    border: 0;
  }
  .tools {
    display: flex;
    height: 72px;
  }
  hr {
    width: 1px;
    margin: 0 5px;
    border: 0;
    background: #262e39;
  }
  .big {
    display: flex;
    flex-direction: column;
    align-items: center;
    box-sizing: border-box;
    min-width: 38px;
    padding: 3px 3px 0;
  }
  .big .ic {
    margin-bottom: 3px;
  }
  .big .tri {
    margin-top: 3px;
  }
  .big.wide {
    min-width: 46px;
  }
  .big.off {
    color: #6a717d;
  }
  .big.selected {
    background: #465a73;
    box-shadow: inset 0 0 0 1px #82c6f0;
  }
  .grid {
    display: grid;
    grid-auto-rows: 24px;
    margin-left: 1px;
  }
  .grid.four {
    grid-template-columns: repeat(4, 24px);
  }
  .grid.two {
    grid-template-columns: repeat(2, 24px);
  }
  .tiny {
    display: grid;
    place-items: center;
  }
  .list {
    display: grid;
    grid-auto-rows: 24px;
  }
  .row {
    display: flex;
    align-items: center;
    gap: 5px;
    padding: 0 5px;
  }
  .row span {
    padding-bottom: 2px;
  }
  .ribbon footer {
    display: flex;
    align-items: center;
    justify-content: center;
    gap: 10px;
    height: 19px;
    padding-top: 2px;
  }
  .ribbon .launcher {
    gap: 0;
    padding-left: 2px;
  }
  .launcher span {
    flex: 1;
    text-align: center;
  }
  .visibility {
    width: 200px;
    margin-left: 1px;
  }
  .vis-icons {
    display: flex;
    gap: 10px;
    height: 25px;
    padding-left: 4px;
  }
  .combo {
    display: flex;
    align-items: center;
    height: 22px;
    box-sizing: border-box;
    padding: 0 2px 0 3px;
    background: #485163;
    border: 1px solid #29313d;
  }
  select {
    flex: 1;
    appearance: none;
    padding: 0;
    border: 0;
    background: none;
    color: #a6adb8;
    font: inherit;
  }

  .docs {
    display: flex;
    align-items: flex-end;
    flex: none;
    height: 26px;
    padding-left: 8px;
    border-bottom: 4px solid #3b4453;
  }
  .doc {
    display: flex;
    align-items: center;
    box-sizing: border-box;
    width: 147px;
    height: 22px;
    margin-right: -24px;
    padding: 0 25px 1px 21px;
    background: #323a47;
    color: #b3b7bd;
    clip-path: polygon(0 100%, 6px 92%, 12px 40%, 15px 10%, 19px 0, calc(100% - 19px) 0, calc(100% - 15px) 10%, calc(100% - 12px) 40%, calc(100% - 6px) 92%, 100% 100%);
  }
  .doc.current {
    justify-content: space-between;
    background: #3b4453;
    color: #fff;
    font-weight: 700;
  }
  .add {
    display: grid;
    place-items: center;
    width: 22px;
    height: 14px;
    margin: 0 0 3px 18px;
    border-radius: 3px 10px 3px 10px;
    background: #323a47;
  }
  .shapes {
    display: flex;
    align-items: center;
    flex: none;
    gap: 10px;
    height: 25px;
    padding: 0 12px 0 7px;
    background: #3c3c3c;
    border-top: 1px solid #000;
    border-bottom: 4px solid #3b4453;
  }
  .shapes button {
    height: 24px;
    padding: 0 11px;
    border: 1px solid #606060;
    background: #4a4a4a;
    color: #fff;
  }
  .shapes .settings {
    margin-left: auto;
    padding: 0;
    border: 0;
    background: none;
  }

  .canvas {
    position: relative;
    flex: 1;
    min-height: 0;
    overflow: hidden;
    background: #9d9d9d;
  }
  .drawing {
    position: absolute;
    inset: 0;
  }
  .crisp {
    shape-rendering: crispEdges;
  }
  .dim {
    fill: #0000f5;
    font: 17px 'Liberation Serif', serif;
  }
  .axis {
    fill: #000;
    font: 300 18px Roboto, sans-serif;
    text-anchor: middle;
  }
  .bar {
    fill: #d8dedc;
    fill-opacity: 0.7;
  }
  .lit {
    fill: #ebebe8;
    fill-opacity: 0.65;
  }
  .ghost {
    opacity: 0.3;
  }
  .win {
    position: absolute;
    top: 8px;
    right: 9px;
    display: flex;
    gap: 6px;
  }
  .cube {
    position: absolute;
    top: 41px;
    right: 18px;
    display: flex;
    flex-direction: column;
    align-items: center;
    gap: 22px;
  }
  .cube svg {
    overflow: visible;
  }
  .up {
    fill: #77787d;
    font-size: 26px;
    font-weight: 300;
    text-anchor: middle;
  }
  .compass text {
    fill: #c3c4c8;
    stroke: #7d7d80;
    stroke-width: 1px;
    paint-order: stroke;
    font-size: 18px;
    text-anchor: middle;
  }
  .wcs {
    display: flex;
    align-items: center;
    gap: 6px;
    height: 17px;
    padding: 0 5px;
    border-radius: 4px;
    background: #c7c9d1;
    color: #626468;
    font: 11px/17px 'Liberation Sans', sans-serif;
  }

  .command {
    display: flex;
    flex: none;
    background: #2a323d;
    border-top: 2px solid #2a323d;
    border-bottom: 2px solid #3b4453;
  }
  .command aside {
    display: flex;
    flex-direction: column;
    width: 22px;
    box-sizing: border-box;
    padding: 5px 0 0 3px;
    gap: 9px;
  }
  .grip {
    width: 17px;
    height: 5px;
    margin-left: -2px;
    background:
      linear-gradient(#2a323d, #2a323d) 0 2px / 100% 1px no-repeat,
      repeating-linear-gradient(90deg, #c9ccd0 0 2px, transparent 2px 3px);
  }
  .lines {
    flex: 1;
    display: flex;
    flex-direction: column;
    gap: 1px;
  }
  .history {
    height: 34px;
    padding: 4px 3px 0;
    background: #c8c8c8;
    color: #111;
    font-size: 13px;
    line-height: 15px;
  }
  .history p {
    height: 15px;
    margin: 0;
  }
  code {
    font: 11px/11px 'DejaVu Sans Mono', monospace;
    white-space: pre;
  }
  .entry {
    display: flex;
    align-items: center;
    height: 20px;
    padding-left: 4px;
    background: #fff;
  }
  .entry .tri {
    margin: 0 8px 0 2px;
  }
  .entry input {
    flex: 1;
    height: 20px;
    box-sizing: border-box;
    padding: 0 0 2px;
    border: 0;
    outline: 0;
    background: none;
    color: #222;
    font: italic 13px/18px 'Noto Sans CJK SC', sans-serif;
  }
  .entry input::placeholder {
    color: #7c7c7c;
    opacity: 1;
  }

  .status {
    display: flex;
    flex: none;
    height: 25px;
    background: #222933;
  }
  .layouts {
    display: flex;
    height: 18px;
    padding-left: 7px;
  }
  .lay {
    padding: 0 14px 1px 13px;
    margin-right: -4px;
    background: #2d3540;
    color: #b3b7bd;
    line-height: 17px;
    clip-path: polygon(0 0, 100% 0, calc(100% - 10px) 92%, calc(100% - 14px) 100%, 12px 100%, 8px 92%);
  }
  .lay.current {
    background: #3b4453;
    color: #fff;
    font-weight: 700;
  }
  .tray {
    display: flex;
    gap: 2px;
    margin-left: auto;
    padding-right: 3px;
  }
  .group {
    display: flex;
    align-items: stretch;
    background: #3b4453;
  }
  .coords {
    box-sizing: border-box;
    width: 180px;
    padding-left: 16px;
    line-height: 26px;
    white-space: nowrap;
    font-family: Roboto, sans-serif;
  }
  .cell {
    display: grid;
    place-items: center;
    width: 24px;
  }
  .cell.on {
    width: 22px;
    background: #5b8fc6;
  }
  .cell.full {
    width: 24px;
  }
  .cell.drop {
    width: 16px;
  }
  .cell.wide {
    width: 20px;
  }
  .text {
    width: 32px;
  }
  .text.scale {
    width: 60px;
    font-family: Roboto, sans-serif;
  }
  .text.units {
    width: 56px;
    padding-left: 5px;
    text-align: left;
  }
</style>
